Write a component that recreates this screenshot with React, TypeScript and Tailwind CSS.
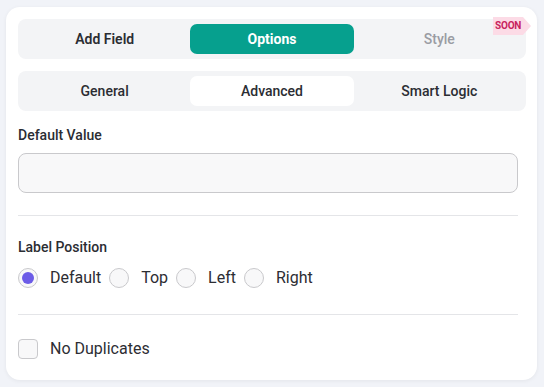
import React from "react";

const font = { fontFamily: "Roboto, 'Noto Sans', sans-serif" };

function Radio({ label, checked }: { label: string; checked?: boolean }) {
  return (
    <label className="flex items-center">
      <span className="w-[20px] h-[20px] rounded-full border border-[#c9c9cc] bg-[#f8f8f9] flex items-center justify-center">
        {checked && <span className="w-[12px] h-[12px] rounded-full bg-[#6c5ce7]" />}
      </span>
      <span className="ml-3 mr-2 text-[16px] text-[#2d2d33]">{label}</span>
    </label>
  );
}

function SoonBadge() {
  return (
    <div className="absolute right-[-5px] top-[-2px] w-[38px] h-[18px]">
      <svg className="absolute inset-0 block" width="38" height="18" viewBox="0 0 38 18">
        <polygon points="0,0 30,0 38,9 30,18 0,18" fill="#fcdbe6" />
      </svg>
      <span className="relative flex h-full items-center pl-[2px] text-[10px] font-bold text-[#c8245e] leading-none tracking-[-0.2px]">
        SOON
      </span>
    </div>
  );
}

export default function App() {
  return (
    <div className="w-[544px] h-[387px] bg-[#f1f3f8] pt-[7px] pl-[6px]" style={font}>
      <div className="w-[531px] h-[373px] bg-white rounded-[14px] shadow-[0_1px_4px_rgba(0,0,0,0.06)] px-3 pt-3">
        {/* main tabs */}
        <div className="relative w-[508px] h-[40px] bg-[#f3f4f6] rounded-[8px] p-[5px] grid grid-cols-3 gap-1">
          <button className="rounded-[7px] text-[14px] font-semibold text-[#2b2d33]">Add Field</button>
          <button className="rounded-[7px] text-[14px] font-bold text-white bg-[#06a08e]">Options</button>
          <button className="rounded-[7px] text-[14px] font-medium text-[#9a9ca3]">Style</button>
          <SoonBadge />
        </div>

        {/* sub tabs */}
        <div className="mt-3 w-[508px] h-[40px] bg-[#f3f4f6] rounded-[8px] p-[5px] grid grid-cols-3 gap-1">
          <button className="rounded-[7px] text-[14px] font-medium text-[#2b2d33]">General</button>
          <button className="rounded-[7px] text-[14px] font-medium text-[#2b2d33] bg-white">Advanced</button>
          <button className="rounded-[7px] text-[14px] font-medium text-[#2b2d33]">Smart Logic</button>
        </div>

        <div className="w-[500px]">
          <div className="mt-[14px] text-[14px] font-medium text-[#2b2d33] leading-[20px]">Default Value</div>
          <div className="mt-[8px] h-[40px] rounded-[8px] border border-[#c9c9cc] bg-[#f8f8f9]" />

          <div className="mt-[22px] h-px bg-[#e4e5e8]" />

          <div className="mt-[21px] text-[14px] font-medium text-[#2b2d33] leading-[20px]">Label Position</div>
          <div className="mt-[10px] flex items-center h-[22px]">
            <Radio label="Default" checked />
            <Radio label="Top" />
            <Radio label="Left" />
            <Radio label="Right" />
          </div>

          <div className="mt-[25px] h-px bg-[#e4e5e8]" />

          <label className="mt-[24px] flex items-center h-[20px]">
            <span className="w-[20px] h-[20px] rounded-[4px] border border-[#c9c9cc] bg-[#f8f8f9]" />
            <span className="ml-3 text-[16px] text-[#2d2d33]">No Duplicates</span>
          </label>
        </div>
      </div>
    </div>
  );
}
